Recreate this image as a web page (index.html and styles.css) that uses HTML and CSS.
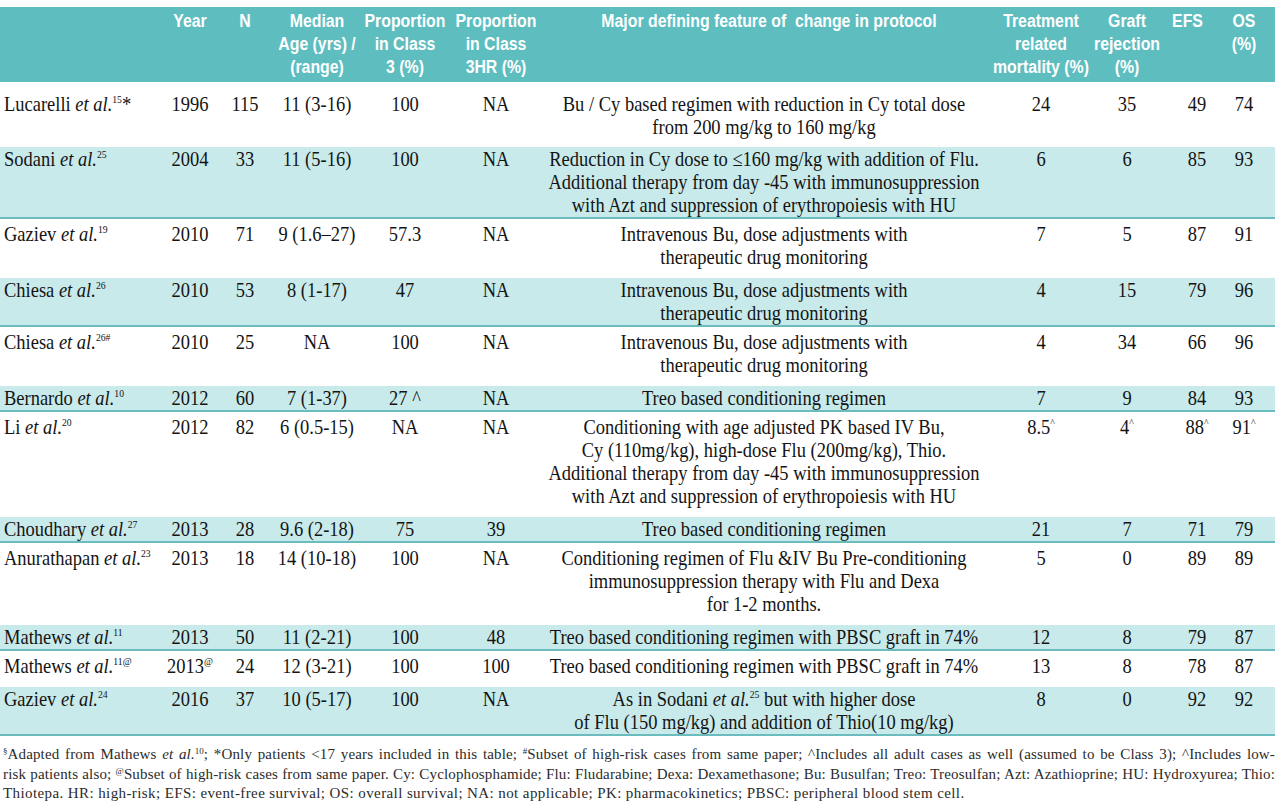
FILE: index.html
```html
<!DOCTYPE html>
<html lang="en">
<head>
<meta charset="utf-8">
<title>Table</title>
<link rel="stylesheet" href="styles.css">
</head>
<body>
<div class="page">
  <table class="tbl">
    <colgroup>
      <col class="c-study"><col class="c-year"><col class="c-n"><col class="c-age"><col class="c-cl3"><col class="c-hr"><col class="c-major"><col class="c-trm"><col class="c-graft"><col class="c-efs"><col class="c-os">
    </colgroup>
    <thead>
      <tr>
        <th></th>
        <th><span class="sx">Year</span></th>
        <th><span class="sx">N</span></th>
        <th><span class="sx">Median<br>Age (yrs) /<br>(range)</span></th>
        <th><span class="sx">Proportion<br>in Class<br>3 (%)</span></th>
        <th><span class="sx">Proportion<br>in Class<br>3HR (%)</span></th>
        <th class="major"><span class="sx">Major defining feature of&nbsp; change in protocol</span></th>
        <th><span class="sx">Treatment<br>related<br>mortality (%)</span></th>
        <th><span class="sx">Graft<br>rejection<br>(%)</span></th>
        <th><span class="sx">EFS</span></th>
        <th><span class="sx">OS<br>(%)</span></th>
      </tr>
    </thead>
    <tbody>
      <tr class="first">
        <td class="study"><span class="sx">Lucarelli <i>et al.</i><sup>15</sup>*</span></td>
        <td><span class="sx">1996</span></td><td><span class="sx">115</span></td><td><span class="sx">11 (3-16)</span></td><td><span class="sx">100</span></td><td><span class="sx">NA</span></td>
        <td><span class="sx">Bu / Cy based regimen with reduction in Cy total dose<br>from 200 mg/kg to 160 mg/kg</span></td>
        <td><span class="sx">24</span></td><td><span class="sx">35</span></td><td class="efs"><span class="sx">49</span></td><td><span class="sx">74</span></td>
      </tr>
      <tr class="shade">
        <td class="study"><span class="sx">Sodani <i>et al.</i><sup>25</sup></span></td>
        <td><span class="sx">2004</span></td><td><span class="sx">33</span></td><td><span class="sx">11 (5-16)</span></td><td><span class="sx">100</span></td><td><span class="sx">NA</span></td>
        <td><span class="sx">Reduction in Cy dose to ≤160 mg/kg with addition of Flu.<br>Additional therapy from day -45 with immunosuppression<br>with Azt and suppression of erythropoiesis with HU</span></td>
        <td><span class="sx">6</span></td><td><span class="sx">6</span></td><td class="efs"><span class="sx">85</span></td><td><span class="sx">93</span></td>
      </tr>
      <tr>
        <td class="study"><span class="sx">Gaziev <i>et al.</i><sup>19</sup></span></td>
        <td><span class="sx">2010</span></td><td><span class="sx">71</span></td><td><span class="sx">9 (1.6–27)</span></td><td><span class="sx">57.3</span></td><td><span class="sx">NA</span></td>
        <td><span class="sx">Intravenous Bu, dose adjustments with<br>therapeutic drug monitoring</span></td>
        <td><span class="sx">7</span></td><td><span class="sx">5</span></td><td class="efs"><span class="sx">87</span></td><td><span class="sx">91</span></td>
      </tr>
      <tr class="shade">
        <td class="study"><span class="sx">Chiesa <i>et al.</i><sup>26</sup></span></td>
        <td><span class="sx">2010</span></td><td><span class="sx">53</span></td><td><span class="sx">8 (1-17)</span></td><td><span class="sx">47</span></td><td><span class="sx">NA</span></td>
        <td><span class="sx">Intravenous Bu, dose adjustments with<br>therapeutic drug monitoring</span></td>
        <td><span class="sx">4</span></td><td><span class="sx">15</span></td><td class="efs"><span class="sx">79</span></td><td><span class="sx">96</span></td>
      </tr>
      <tr>
        <td class="study"><span class="sx">Chiesa <i>et al.</i><sup>26#</sup></span></td>
        <td><span class="sx">2010</span></td><td><span class="sx">25</span></td><td><span class="sx">NA</span></td><td><span class="sx">100</span></td><td><span class="sx">NA</span></td>
        <td><span class="sx">Intravenous Bu, dose adjustments with<br>therapeutic drug monitoring</span></td>
        <td><span class="sx">4</span></td><td><span class="sx">34</span></td><td class="efs"><span class="sx">66</span></td><td><span class="sx">96</span></td>
      </tr>
      <tr class="shade">
        <td class="study"><span class="sx">Bernardo <i>et al.</i><sup>10</sup></span></td>
        <td><span class="sx">2012</span></td><td><span class="sx">60</span></td><td><span class="sx">7 (1-37)</span></td><td><span class="sx">27 ^</span></td><td><span class="sx">NA</span></td>
        <td><span class="sx">Treo based conditioning regimen</span></td>
        <td><span class="sx">7</span></td><td><span class="sx">9</span></td><td class="efs"><span class="sx">84</span></td><td><span class="sx">93</span></td>
      </tr>
      <tr>
        <td class="study"><span class="sx">Li <i>et al.</i><sup>20</sup></span></td>
        <td><span class="sx">2012</span></td><td><span class="sx">82</span></td><td><span class="sx">6 (0.5-15)</span></td><td><span class="sx">NA</span></td><td><span class="sx">NA</span></td>
        <td><span class="sx">Conditioning with age adjusted PK based IV Bu,<br>Cy (110mg/kg), high-dose Flu (200mg/kg), Thio.<br>Additional therapy from day -45 with immunosuppression<br>with Azt and suppression of erythropoiesis with HU</span></td>
        <td><span class="sx">8.5<sup>^</sup></span></td><td><span class="sx">4<sup>^</sup></span></td><td class="efs"><span class="sx">88<sup>^</sup></span></td><td><span class="sx">91<sup>^</sup></span></td>
      </tr>
      <tr class="shade">
        <td class="study"><span class="sx">Choudhary <i>et al.</i><sup>27</sup></span></td>
        <td><span class="sx">2013</span></td><td><span class="sx">28</span></td><td><span class="sx">9.6 (2-18)</span></td><td><span class="sx">75</span></td><td><span class="sx">39</span></td>
        <td><span class="sx">Treo based conditioning regimen</span></td>
        <td><span class="sx">21</span></td><td><span class="sx">7</span></td><td class="efs"><span class="sx">71</span></td><td><span class="sx">79</span></td>
      </tr>
      <tr>
        <td class="study"><span class="sx">Anurathapan <i>et al.</i><sup>23</sup></span></td>
        <td><span class="sx">2013</span></td><td><span class="sx">18</span></td><td><span class="sx">14 (10-18)</span></td><td><span class="sx">100</span></td><td><span class="sx">NA</span></td>
        <td><span class="sx">Conditioning regimen of Flu &amp;IV Bu Pre-conditioning<br>immunosuppression therapy with Flu and Dexa<br>for 1-2 months.</span></td>
        <td><span class="sx">5</span></td><td><span class="sx">0</span></td><td class="efs"><span class="sx">89</span></td><td><span class="sx">89</span></td>
      </tr>
      <tr class="shade">
        <td class="study"><span class="sx">Mathews <i>et al.</i><sup>11</sup></span></td>
        <td><span class="sx">2013</span></td><td><span class="sx">50</span></td><td><span class="sx">11 (2-21)</span></td><td><span class="sx">100</span></td><td><span class="sx">48</span></td>
        <td><span class="sx">Treo based conditioning regimen with PBSC graft in 74%</span></td>
        <td><span class="sx">12</span></td><td><span class="sx">8</span></td><td class="efs"><span class="sx">79</span></td><td><span class="sx">87</span></td>
      </tr>
      <tr>
        <td class="study"><span class="sx">Mathews <i>et al.</i><sup>11@</sup></span></td>
        <td><span class="sx">2013<sup>@</sup></span></td><td><span class="sx">24</span></td><td><span class="sx">12 (3-21)</span></td><td><span class="sx">100</span></td><td><span class="sx">100</span></td>
        <td><span class="sx">Treo based conditioning regimen with PBSC graft in 74%</span></td>
        <td><span class="sx">13</span></td><td><span class="sx">8</span></td><td class="efs"><span class="sx">78</span></td><td><span class="sx">87</span></td>
      </tr>
      <tr class="shade">
        <td class="study"><span class="sx">Gaziev <i>et al.</i><sup>24</sup></span></td>
        <td><span class="sx">2016</span></td><td><span class="sx">37</span></td><td><span class="sx">10 (5-17)</span></td><td><span class="sx">100</span></td><td><span class="sx">NA</span></td>
        <td><span class="sx">As in Sodani <i>et al.</i><sup>25</sup> but with higher dose<br>of Flu (150 mg/kg) and addition of Thio(10 mg/kg)</span></td>
        <td><span class="sx">8</span></td><td><span class="sx">0</span></td><td class="efs"><span class="sx">92</span></td><td><span class="sx">92</span></td>
      </tr>
    </tbody>
  </table>
  <div class="notes">
    <div class="note-line just"><sup>§</sup>Adapted from Mathews <i>et al.</i><sup>10</sup>; *Only patients &lt;17 years included in this table; <sup>#</sup>Subset of high-risk cases from same paper; ^Includes all adult cases as well (assumed to be Class 3); ^Includes low-</div>
    <div class="note-line just">risk patients also; <sup>@</sup>Subset of high-risk cases from same paper. Cy: Cyclophosphamide; Flu: Fludarabine; Dexa: Dexamethasone; Bu: Busulfan; Treo: Treosulfan; Azt: Azathioprine; HU: Hydroxyurea; Thio:</div>
    <div class="note-line last">Thiotepa. HR: high-risk; EFS: event-free survival; OS: overall survival; NA: not applicable; PK: pharmacokinetics; PBSC: peripheral blood stem cell.</div>
  </div>
</div>
</body>
</html>
```

FILE: styles.css
```css
html, body {
  margin: 0;
  padding: 0;
  background: #ffffff;
}

.page {
  width: 1280px;
  overflow: hidden;
  padding-top: 7px;
}

.tbl {
  width: 1275px;
  table-layout: fixed;
  border-collapse: collapse;
  border-spacing: 0;
  font-family: "Liberation Serif", "Times New Roman", serif;
  font-size: 21px;
  line-height: 23px;
  color: #141414;
}

.c-study { width: 168px; }
.c-year { width: 44px; }
.c-n { width: 66px; }
.c-age { width: 78px; }
.c-cl3 { width: 98px; }
.c-hr { width: 84px; }
.c-major { width: 452px; }
.c-trm { width: 102px; }
.c-graft { width: 70px; }
.c-efs { width: 51px; }
.c-os { width: 62px; }

/* condensed look: every cell's content is narrowed around its centre */
.sx {
  display: block;
  margin: 0 -80px;
  white-space: nowrap;
  transform: scaleX(0.88);
  transform-origin: 50% 50%;
}

.tbl thead th {
  background: #5dbdbf;
  color: #ffffff;
  font-family: "Liberation Sans", Arial, sans-serif;
  font-weight: 700;
  font-size: 18px;
  line-height: 23px;
  vertical-align: top;
  text-align: center;
  padding: 3px 0 3px;
}

.tbl thead th.major {
  padding-left: 10px;
}

.tbl tbody td {
  vertical-align: top;
  text-align: center;
  padding: 4px 0 9px;
}

.tbl tbody tr.first td {
  padding-top: 11px;
  padding-bottom: 8px;
}

.tbl tbody tr.shade td {
  background: #c8eaeb;
  padding: 1px 0 0;
  border-bottom: 2px solid #6bbcbf;
}

.tbl tbody td.study,
.tbl tbody tr.shade td.study {
  text-align: left;
  padding-left: 4px;
}

.tbl td.study .sx {
  margin: 0 -80px 0 0;
  transform-origin: 0 50%;
}

.tbl tbody td.efs,
.tbl tbody tr.shade td.efs {
  padding-left: 19px;
}

.tbl sup {
  font-size: 11px;
  line-height: 0;
  vertical-align: 8px;
}

.notes {
  width: 1272px;
  padding: 9px 0 0 3px;
  font-family: "Liberation Serif", "Times New Roman", serif;
  font-size: 15px;
  line-height: 19.5px;
  color: #2b2b2b;
  letter-spacing: 0.15px;
}

.note-line {
  white-space: nowrap;
}

.note-line.just {
  text-align: justify;
  text-align-last: justify;
}

.note-line.last {
  letter-spacing: 0.4px;
}

.notes sup {
  font-size: 9px;
  line-height: 0;
  vertical-align: 5px;
  letter-spacing: 0;
}
```
